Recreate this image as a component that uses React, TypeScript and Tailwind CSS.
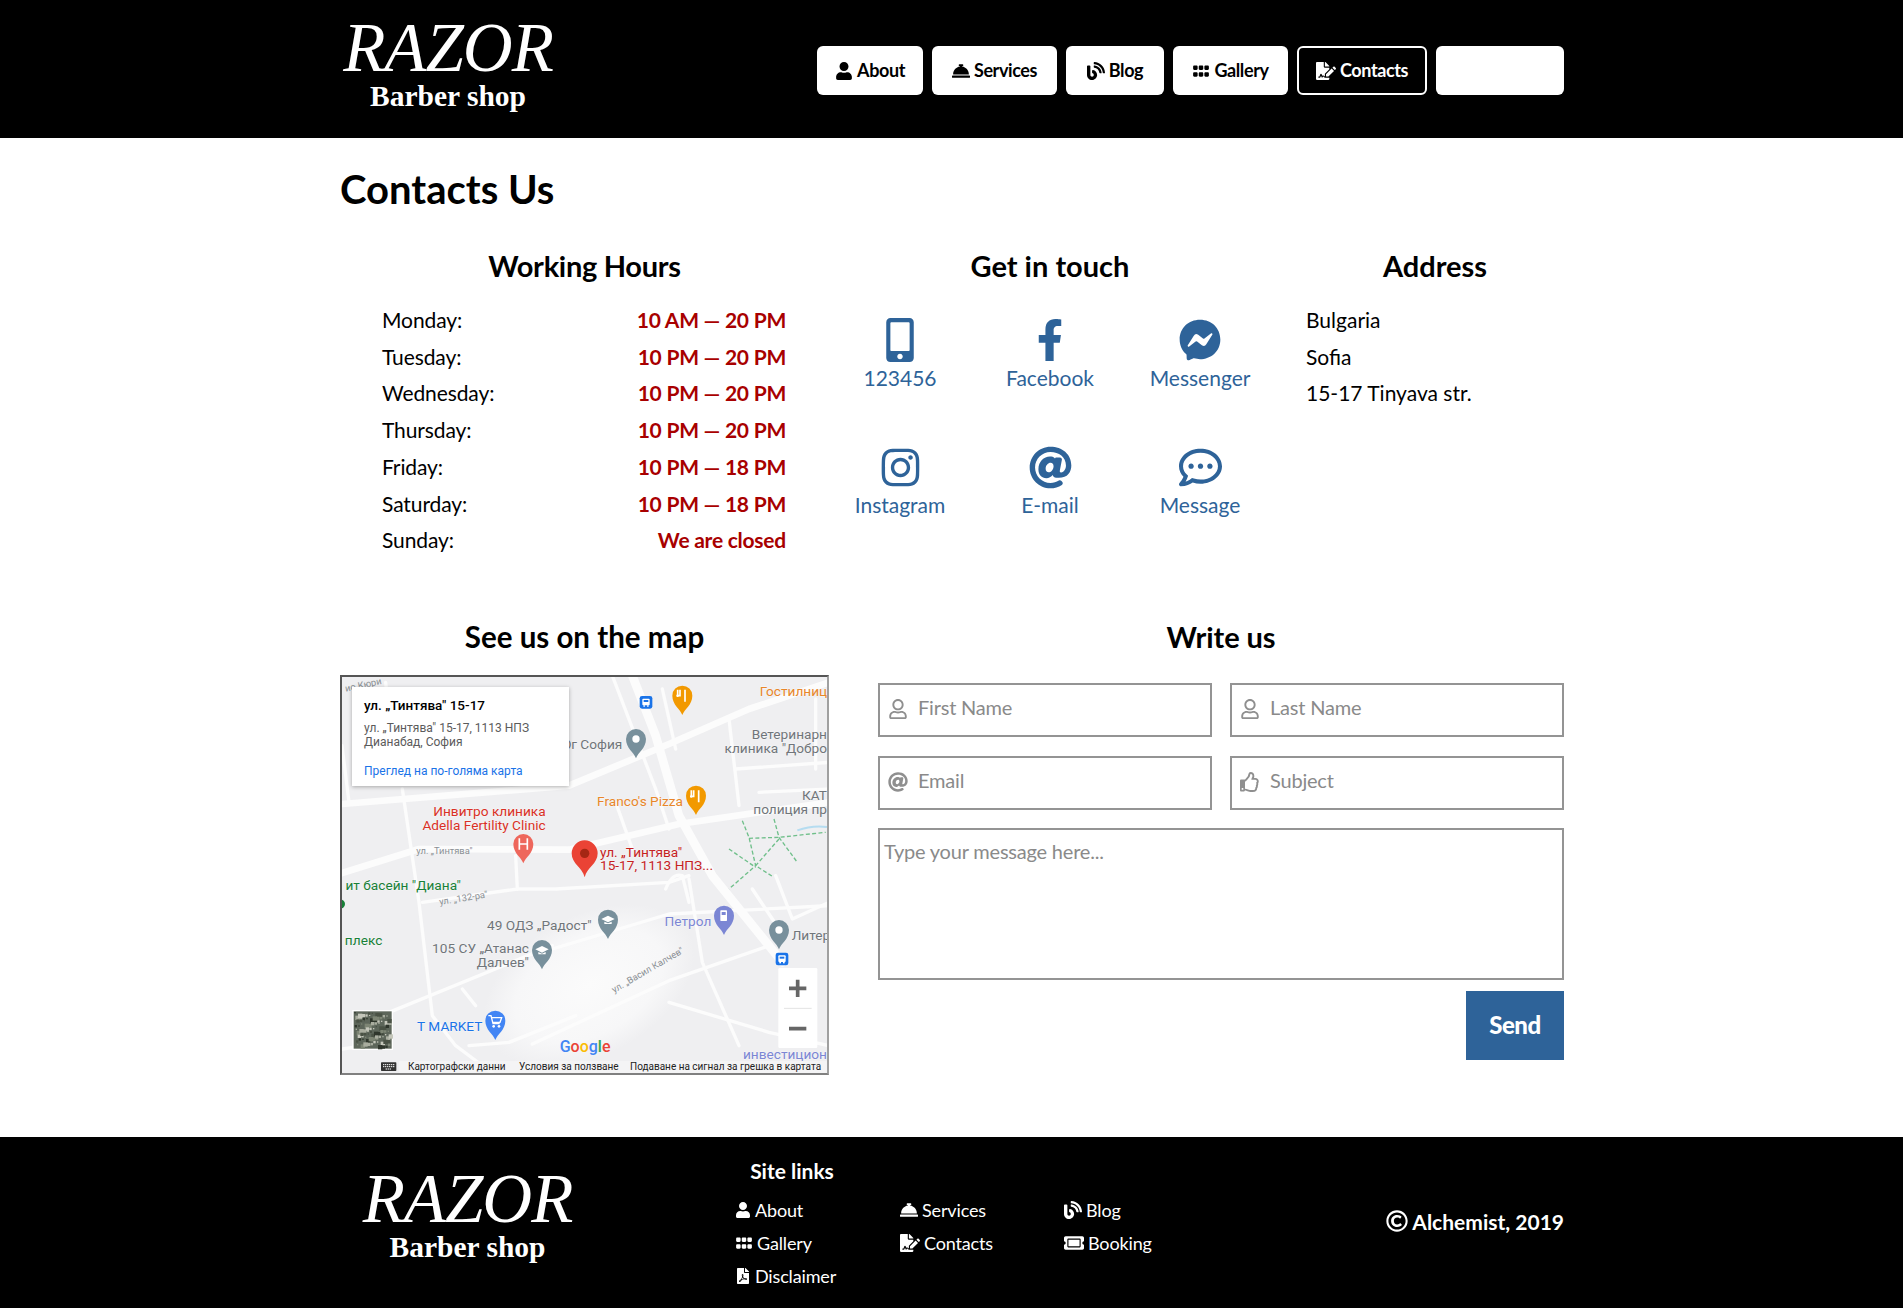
import type { ReactNode } from 'react';
import {
  FaUser,
  FaConciergeBell,
  FaBlog,
  FaGripHorizontal,
  FaFileSignature,
  FaTicketAlt,
  FaFilePdf,
  FaMobileAlt,
  FaFacebookF,
  FaFacebookMessenger,
  FaInstagram,
  FaAt,
  FaRegCommentDots,
  FaRegUser,
  FaRegThumbsUp,
  FaRegCopyright,
} from 'react-icons/fa';

const hours = [
  ['Monday:', '10 AM — 20 PM'],
  ['Tuesday:', '10 PM — 20 PM'],
  ['Wednesday:', '10 PM — 20 PM'],
  ['Thursday:', '10 PM — 20 PM'],
  ['Friday:', '10 PM — 18 PM'],
  ['Saturday:', '10 PM — 18 PM'],
  ['Sunday:', 'We are closed'],
];

const contacts = [
  { label: '123456', icon: <FaMobileAlt size={44} /> },
  { label: 'Facebook', icon: <FaFacebookF size={42} /> },
  { label: 'Messenger', icon: <FaFacebookMessenger size={42} /> },
  { label: 'Instagram', icon: <FaInstagram size={43} /> },
  { label: 'E-mail', icon: <FaAt size={43} /> },
  { label: 'Message', icon: <FaRegCommentDots size={43} /> },
];

const navItems = [
  { label: 'About', icon: <FaUser size={18} />, width: 'w-[106px]' },
  { label: 'Services', icon: <FaConciergeBell size={18} />, width: 'w-[125px]' },
  { label: 'Blog', icon: <FaBlog size={18} />, width: 'w-[98px]' },
  { label: 'Gallery', icon: <FaGripHorizontal size={18} />, width: 'w-[115px]' },
];

const footerLinks = [
  { label: 'About', icon: <FaUser size={16} /> },
  { label: 'Services', icon: <FaConciergeBell size={18} /> },
  { label: 'Blog', icon: <FaBlog size={18} /> },
  { label: 'Gallery', icon: <FaGripHorizontal size={18} /> },
  { label: 'Contacts', icon: <FaFileSignature size={20} /> },
  { label: 'Booking', icon: <FaTicketAlt size={20} /> },
  { label: 'Disclaimer', icon: <FaFilePdf size={16} /> },
];

// speckle for the satellite thumbnail
const satellite = Array.from({ length: 90 }, (_, i) => ({
  x: 56 + ((i * 37) % 104),
  y: 1029 + ((i * 53) % 102),
  w: 4 + (i % 4) * 3,
  fill: ['#2f362c', '#a9ad9f', '#4a5245', '#7d8574', '#c4c6ba'][i % 5],
}));

function Logo() {
  return (
    <div className="flex flex-col items-center text-white [font-family:'Liberation_Serif',serif]">
      <div className="text-[69px] leading-[62px] italic tracking-[-1px]">RAZOR</div>
      <div className="text-[29.5px] leading-[34px] font-bold">Barber shop</div>
    </div>
  );
}

function Field({ icon, placeholder }: { icon: ReactNode; placeholder: string }) {
  return (
    <div className="relative w-[334px]">
      <span className="absolute left-[10px] top-[16px] text-[#8f8f8f]">{icon}</span>
      <input
        placeholder={placeholder}
        className="w-full h-[54px] border-2 border-[#949494] pl-[38px] pb-[5px] text-[20px] tracking-[-0.2px] outline-none placeholder:text-[#8a8a8a]"
      />
    </div>
  );
}

function Pin({ x, y, color, children }: { x: number; y: number; color: string; children?: ReactNode }) {
  return (
    <g>
      <path d={`M${x} ${y + 58} C${x - 6} ${y + 40} ${x - 30} ${y + 28} ${x - 30} ${y} A30 30 0 1 1 ${x + 30} ${y} C${x + 30} ${y + 28} ${x + 6} ${y + 40} ${x} ${y + 58}Z`} fill={color} />
      {children}
    </g>
  );
}

function MapLabel({ x, y, fill, anchor, size = 41, children }: { x: number; y: number; fill: string; anchor?: 'start' | 'end' | 'middle'; size?: number; children: ReactNode }) {
  return (
    <text x={x} y={y} fill={fill} textAnchor={anchor} fontSize={size} stroke="#ffffff" strokeWidth={1} paintOrder="stroke">
      {children}
    </text>
  );
}

function SchoolHat({ x, y }: { x: number; y: number }) {
  return <path d={`M${x - 20} ${y - 2} L${x} ${y - 12} L${x + 20} ${y - 2} L${x} ${y + 8}Z M${x - 11} ${y + 6} V${y + 13} H${x + 11} V${y + 6} L${x} ${y + 11}Z`} fill="#ffffff" />;
}

function BusStop({ x, y }: { x: number; y: number }) {
  return (
    <g>
      <rect x={x - 19} y={y - 19} width={38} height={38} rx={7} fill="#1a73e8" />
      <rect x={x - 11} y={y - 11} width={22} height={20} rx={3} fill="#ffffff" />
      <rect x={x - 7} y={y - 7} width={14} height={6} fill="#1a73e8" />
      <rect x={x - 8} y={y + 9} width={5} height={4} fill="#ffffff" />
      <rect x={x + 3} y={y + 9} width={5} height={4} fill="#ffffff" />
    </g>
  );
}

function GoogleMap() {
  return (
    <div className="relative w-[489px] h-[400px] mt-[18px] border-2 border-t-[#555555] border-l-[#555555] border-r-[#a0a0a0] border-b-[#808080] overflow-hidden bg-[#efeff1]">
      <svg width="485" height="396" viewBox="19 24 1455 1188" className="block [font-family:Roboto,sans-serif]">
        <defs>
          <radialGradient id="patch">
            <stop offset="0" stopColor="#fbfbfb" />
            <stop offset="0.7" stopColor="#f7f7f8" />
            <stop offset="1" stopColor="#efeff1" />
          </radialGradient>
        </defs>
        <rect x="19" y="24" width="1455" height="1188" fill="#efeff1" />
        <ellipse cx="760" cy="950" rx="340" ry="210" fill="url(#patch)" transform="rotate(-28 760 950)" />
        <g fill="none" stroke="#fcfcfc" strokeLinecap="round" strokeLinejoin="round">
          <path d="M19 405 L700 350 L1000 225 L1240 120 L1480 40" strokeWidth="20" />
          <path d="M890 20 L960 200 L1030 440 L1130 620 L1340 880" strokeWidth="26" />
          <path d="M19 612 L250 540 L700 542 L1030 465 L1480 400" strokeWidth="20" />
          <g strokeWidth="10">
            <path d="M830 20 L960 360 L1000 480" />
            <path d="M650 840 L1000 735 L1480 710" />
            <path d="M160 1030 L650 830" />
            <path d="M590 1125 L1000 935 L1300 830" />
            <path d="M200 360 L250 700 L290 1040 L360 1130 L470 1212" />
            <path d="M1060 630 L1100 880 L1210 1130" />
            <path d="M1180 150 L1210 410" />
            <path d="M540 560 L545 660 L260 700" />
            <path d="M545 660 L660 660 L1000 640 L1060 620" />
            <path d="M1000 1000 L1300 1090 L1480 1130" />
            <path d="M400 1130 L520 1120 L720 1040" />
            <path d="M840 400 L890 540" />
            <path d="M1200 300 L1480 280" />
            <path d="M1250 660 L1330 780" />
            <path d="M1320 620 L1370 750 L1480 700" />
            <path d="M990 660 Q1010 610 1040 620 L1060 700" />
            <path d="M19 230 L40 400" />
            <path d="M150 40 L180 340" />
            <path d="M980 60 L1020 240" />
            <path d="M1270 370 L1480 360" />
            <path d="M1440 90 L1440 300" />
            <path d="M19 1140 L160 1120" />
            <path d="M380 960 L420 1010" />
          </g>
        </g>
        <g fill="none" stroke="#6fbf8a" strokeWidth="4" strokeDasharray="12 7">
          <path d="M1220 455 L1240 505 L1260 590 L1180 660" />
          <path d="M1240 508 L1330 505 L1470 490" />
          <path d="M1315 450 L1330 505 L1385 580" />
          <path d="M1330 510 L1260 590 L1310 622" />
          <path d="M1180 540 L1260 595" />
        </g>
        <path d="M1385 484 Q1430 468 1474 474" fill="none" stroke="#b5dcf0" strokeWidth="6" />
        <circle cx={14} cy={705} r={14} fill="#188038" />

        <g fontFamily="Roboto, sans-serif">
          <MapLabel x={1272} y={80} fill="#e8862a">Гостилниц</MapLabel>
          <MapLabel x={1474} y={210} fill="#70757a" anchor="end">Ветеринарн</MapLabel>
          <MapLabel x={1474} y={252} fill="#70757a" anchor="end">клиника "Добро</MapLabel>
          <MapLabel x={860} y={240} fill="#70757a" anchor="end">Юг София</MapLabel>
          <MapLabel x={1042} y={410} fill="#e8862a" anchor="end">Franco's Pizza</MapLabel>
          <MapLabel x={1474} y={392} fill="#70757a" anchor="end">КАТ</MapLabel>
          <MapLabel x={1474} y={436} fill="#70757a" anchor="end">полиция пр</MapLabel>
          <MapLabel x={630} y={441} fill="#d93025" anchor="end">Инвитро клиника</MapLabel>
          <MapLabel x={630} y={482} fill="#d93025" anchor="end">Adella Fertility Clinic</MapLabel>
          <MapLabel x={793} y={563} fill="#c5221f">ул. „Тинтява"</MapLabel>
          <MapLabel x={793} y={604} fill="#c5221f">15-17, 1113 НПЗ...</MapLabel>
          <MapLabel x={376} y={663} fill="#188038" anchor="end">ит басейн "Диана"</MapLabel>
          <MapLabel x={140} y={827} fill="#188038" anchor="end">плекс</MapLabel>
          <MapLabel x={768} y={783} fill="#70757a" anchor="end">49 ОДЗ „Радост"</MapLabel>
          <MapLabel x={580} y={852} fill="#70757a" anchor="end">105 СУ „Атанас</MapLabel>
          <MapLabel x={580} y={894} fill="#70757a" anchor="end">Далчев"</MapLabel>
          <MapLabel x={1127} y={770} fill="#7b86d4" anchor="end">Петрол</MapLabel>
          <MapLabel x={1368} y={812} fill="#70757a">Литер</MapLabel>
          <MapLabel x={440} y={1085} fill="#1a73e8" anchor="end">T MARKET</MapLabel>
          <MapLabel x={1474} y={1170} fill="#7b86d4" anchor="end">инвестицион</MapLabel>
          <text x={242} y={556} fill="#8a8f94" fontSize="28">ул. „Тинтява"</text>
          <text x={312} y={708} fill="#8a8f94" fontSize="28" transform="rotate(-9 312 708)">ул. „132-ра"</text>
          <text x={835} y={972} fill="#8a8f94" fontSize="28" transform="rotate(-30 835 972)">ул. „Васил Калчев"</text>
          <text x={30} y={68} fill="#8a8f94" fontSize="28" transform="rotate(-12 30 68)">ио Кюри</text>
        </g>

        <BusStop x={931} y={100} />
        <BusStop x={1339} y={870} />

        <Pin x={1040} y={80} color="#f29900">
          <path d="M1026 62 V84 M1033 62 V80 H1022 M1048 62 V98" stroke="#ffffff" strokeWidth="5" fill="none" />
        </Pin>
        <Pin x={1081} y={380} color="#f29900">
          <path d="M1067 364 V386 M1074 364 V382 H1063 M1089 364 V400" stroke="#ffffff" strokeWidth="5" fill="none" />
        </Pin>
        <Pin x={901} y={210} color="#78909c">
          <circle cx={901} cy={210} r={11} fill="#ffffff" />
        </Pin>
        <Pin x={1330} y={783} color="#78909c">
          <circle cx={1330} cy={783} r={11} fill="#ffffff" />
        </Pin>
        <Pin x={817} y={752} color="#78909c">
          <SchoolHat x={817} y={752} />
        </Pin>
        <Pin x={619} y={843} color="#78909c">
          <SchoolHat x={619} y={843} />
        </Pin>
        <Pin x={563} y={525} color="#ee675c">
          <path d="M551 508 V542 M575 508 V542 M551 525 H575" stroke="#ffffff" strokeWidth="5" fill="none" />
        </Pin>
        <Pin x={1165} y={740} color="#7b86d4">
          <rect x={1154} y={724} width={20} height={32} rx={2} fill="#ffffff" />
          <rect x={1158} y={729} width={12} height={9} fill="#7b86d4" />
        </Pin>
        <Pin x={479} y={1055} color="#4285f4">
          <path d="M458 1040 H466 L472 1064 H492 M468 1046 H498 L493 1060 H472" stroke="#ffffff" strokeWidth="4" fill="none" />
          <circle cx={474} cy={1072} r={4} fill="#ffffff" />
          <circle cx={490} cy={1072} r={4} fill="#ffffff" />
        </Pin>
        <path d="M747 625 C740 595 708 585 708 553 A39 39 0 1 1 786 553 C786 585 754 595 747 625Z" fill="#ea4335" />
        <circle cx={747} cy={553} r={14} fill="#a52714" />

        <g>
          <rect x={50} y={1023} width={122} height={120} fill="#ffffff" />
          <rect x={54} y={1027} width={114} height={112} fill="#5d665a" />
          {satellite.map((s, i) => (
            <rect key={i} x={s.x} y={s.y} width={s.w} height={s.w} fill={s.fill} />
          ))}
        </g>

        <rect x={1328} y={897} width={117} height={240} rx={4} fill="#ffffff" />
        <path d="M1345 1018 H1428" stroke="#e3e3e3" strokeWidth="3" />
        <path d="M1386 932 V984 M1360 958 H1412 M1360 1079 H1412" stroke="#666666" strokeWidth="11" />

        <text x={672} y={1148} fontSize="48" fontWeight="500" fontFamily="Roboto, sans-serif">
          <tspan fill="#4285f4">G</tspan>
          <tspan fill="#ea4335">o</tspan>
          <tspan fill="#fbbc05">o</tspan>
          <tspan fill="#4285f4">g</tspan>
          <tspan fill="#34a853">l</tspan>
          <tspan fill="#ea4335">e</tspan>
        </text>

        <rect x={190} y={1176} width={1284} height={36} fill="#f5f5f5" fillOpacity="0.75" />
        <rect x={136} y={1180} width={46} height={26} rx={2} fill="#333333" />
        <path d="M142 1187 H176 M142 1193 H176 M150 1200 H168" stroke="#ffffff" strokeWidth="3" strokeDasharray="4 2" />
        <g fill="#222222" fontSize="30">
          <text x={217} y={1203}>Картографски данни</text>
          <text x={550} y={1203}>Условия за ползване</text>
          <text x={883} y={1203}>Подаване на сигнал за грешка в картата</text>
        </g>
      </svg>
      <div className="absolute left-[10px] top-[10px] w-[217px] h-[99px] bg-white shadow-[0_1px_4px_rgba(0,0,0,0.3)] px-[12px] pt-[9px] [font-family:Roboto,sans-serif]">
        <div className="text-[13.5px] leading-[18px] font-medium text-black whitespace-nowrap">ул. „Тинтява" 15-17</div>
        <div className="text-[12px] leading-[14px] text-[#5b5b5b] mt-[7px] whitespace-nowrap">
          ул. „Тинтява" 15-17, 1113 НПЗ
          <br />
          Дианабад, София
        </div>
        <div className="text-[12px] leading-[14px] text-[#1a73e8] mt-[15px] whitespace-nowrap">Преглед на по-голяма карта</div>
      </div>
    </div>
  );
}

export default function App() {
  return (
    <div className="bg-white text-black [font-family:Lato,sans-serif]">
      {/* Header */}
      <header className="bg-black h-[138px]">
        <div className="w-[1224px] ml-[340px] h-full flex items-center justify-between">
          <div className="w-[216px] -mt-[8px]">
            <Logo />
          </div>
          <nav className="flex gap-[9px] mt-[3px] -ml-[1px]">
            {navItems.map((item) => (
              <a key={item.label} className={`${item.width} h-[49px] bg-white rounded-[6px] flex items-center justify-center gap-[4px] text-[18px] tracking-[-0.4px] font-bold text-black`}>
                {item.icon}
                {item.label}
              </a>
            ))}
            <a className="w-[130px] h-[49px] bg-black border-2 border-white rounded-[6px] flex items-center justify-center gap-[4px] text-[18px] tracking-[-0.4px] font-bold text-white">
              <FaFileSignature size={20} />
              Contacts
            </a>
            <a className="w-[128px] h-[49px] bg-white rounded-[6px]" />
          </nav>
        </div>
      </header>

      {/* Content */}
      <main className="w-[1224px] ml-[340px] pt-[24px] pb-[62px]">
        <h1 className="text-[40px] leading-[54px] font-bold">Contacts Us</h1>

        <div className="flex mt-[30px]">
          <section className="w-[485px]">
            <h2 className="w-[489px] text-center text-[29px] leading-[40px] font-bold tracking-[-0.3px]">Working Hours</h2>
            <div className="ml-[42px] w-[404px] mt-[16px]">
              {hours.map(([day, time]) => (
                <div key={day} className="flex justify-between text-[21px] leading-[36.7px]">
                  <span className="tracking-[-0.1px]">{day}</span>
                  <span className="font-bold text-[#a80000] tracking-[-0.25px]">{time}</span>
                </div>
              ))}
            </div>
          </section>

          <section className="w-[450px]">
            <h2 className="text-center text-[29px] leading-[40px] font-bold">Get in touch</h2>
            <div className="grid grid-cols-3 mt-[16px]">
              {contacts.map((c) => (
                <div key={c.label} className="h-[127px] pt-[16px] flex flex-col items-center text-[#2e6399]">
                  <span className="h-[44px] flex items-center justify-center">{c.icon}</span>
                  <span className="text-[21px] leading-[36px] -mt-[2px]">{c.label}</span>
                </div>
              ))}
            </div>
          </section>

          <section className="w-[258px] ml-[31px]">
            <h2 className="text-center text-[29px] leading-[40px] font-bold">Address</h2>
            <div className="mt-[16px] text-[21px] leading-[36.7px]">
              <div>Bulgaria</div>
              <div>Sofia</div>
              <div>15-17 Tinyava str.</div>
            </div>
          </section>
        </div>

        <div className="flex justify-between mt-[58px]">
          <section className="w-[489px]">
            <h2 className="text-center text-[29.5px] leading-[40px] font-bold">See us on the map</h2>
            <GoogleMap />
          </section>

          <section className="w-[686px]">
            <h2 className="text-center text-[29px] leading-[40px] font-bold tracking-[-0.1px]">Write us</h2>
            <form className="mt-[26px] flex flex-col">
              <div className="flex justify-between">
                <Field icon={<FaRegUser size={20} />} placeholder="First Name" />
                <Field icon={<FaRegUser size={20} />} placeholder="Last Name" />
              </div>
              <div className="flex justify-between mt-[19px]">
                <Field icon={<FaAt size={20} />} placeholder="Email" />
                <Field icon={<FaRegThumbsUp size={20} />} placeholder="Subject" />
              </div>
              <textarea
                placeholder="Type your message here..."
                className="block w-full h-[152px] mt-[18px] border-2 border-[#949494] px-[4px] py-[6px] text-[20px] tracking-[-0.2px] outline-none resize-none placeholder:text-[#8a8a8a]"
              />
              <button type="button" className="self-end w-[98px] h-[69px] mt-[11px] bg-[#2e6399] text-white text-[24px] font-black tracking-[-0.5px]">
                Send
              </button>
            </form>
          </section>
        </div>
      </main>

      {/* Footer */}
      <footer className="bg-black h-[171px] text-white">
        <div className="w-[1224px] ml-[340px] h-full flex">
          <div className="w-[250px] pl-[5px] pt-[31px]">
            <Logo />
          </div>
          <div className="w-[560px] ml-[145px] pt-[20px]">
            <div className="w-[114px] text-center text-[21px] leading-[28px] font-bold">Site links</div>
            <div className="grid grid-cols-[165px_164px_auto] mt-[9px] w-[420px]">
              {footerLinks.map((l) => (
                <div key={l.label} className="h-[33px] flex items-center gap-[4px] text-[18px] tracking-[-0.15px]">
                  {l.icon}
                  {l.label}
                </div>
              ))}
            </div>
          </div>
          <div className="flex-1 flex items-center justify-end gap-[4px] text-[21px] font-bold -mt-[2px]">
            <FaRegCopyright size={22} />
            Alchemist, 2019
          </div>
        </div>
      </footer>
    </div>
  );
}
